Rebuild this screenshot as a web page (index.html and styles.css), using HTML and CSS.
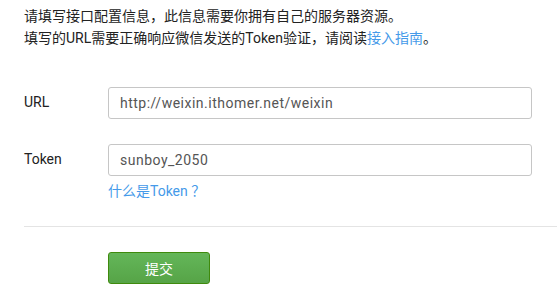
FILE: index.html
```html
<!DOCTYPE html>
<html lang="zh-CN">
<head>
<meta charset="utf-8">
<title>接口配置信息</title>
<link rel="stylesheet" href="styles.css">
</head>
<body>
<div class="page">
  <div class="intro">
    <p>请填写接口配置信息，此信息需要你拥有自己的服务器资源。</p>
    <p>填写的URL需要正确响应微信发送的Token验证，请阅读<a class="link" href="#">接入指南</a>。</p>
  </div>
  <div class="form">
    <div class="row">
      <label class="label">URL</label>
      <div class="field">
        <input class="input" type="text" value="http://weixin.ithomer.net/weixin">
      </div>
    </div>
    <div class="row row-token">
      <label class="label">Token</label>
      <div class="field">
        <input class="input" type="text" value="sunboy_2050">
        <a class="link help" href="#">什么是Token ？</a>
      </div>
    </div>
  </div>
  <div class="divider"></div>
  <div class="actions">
    <button class="btn" type="button">提交</button>
  </div>
</div>
</body>
</html>
```
FILE: styles.css
```css
html, body {
  margin: 0;
  padding: 0;
  background: #fff;
}
body {
  font-family: Roboto, "Noto Sans CJK SC", sans-serif;
  font-size: 14px;
  color: #222;
}
.page {
  padding: 5px 0 0 24px;
}
.intro p {
  margin: 0;
  line-height: 22px;
}
.link {
  color: #459ae9;
  text-decoration: none;
}
.form {
  margin-top: 38px;
}
.row {
  display: flex;
  align-items: flex-start;
}
.row-token {
  margin-top: 25px;
}
.label {
  width: 84px;
  line-height: 30px;
  color: #222;
}
.field {
  display: flex;
  flex-direction: column;
  align-items: flex-start;
}
.input {
  box-sizing: border-box;
  width: 424px;
  height: 32px;
  border: 1px solid #c6c6c6;
  border-radius: 3px;
  padding: 0 11px;
  font-family: inherit;
  font-size: 14px;
  letter-spacing: 0.5px;
  color: #555;
  outline: none;
}
.help {
  margin-top: 4px;
  line-height: 22px;
}
.divider {
  margin-top: 24px;
  height: 1px;
  background: #e4e4e4;
}
.actions {
  margin-top: 25px;
  padding-left: 84px;
}
.btn {
  box-sizing: border-box;
  width: 102px;
  height: 32px;
  border: 1px solid #3f8a0d;
  border-radius: 3px;
  background: linear-gradient(#64b659, #56a447);
  color: #fff;
  font-family: inherit;
  font-size: 14px;
  padding: 0;
  cursor: pointer;
}
```
